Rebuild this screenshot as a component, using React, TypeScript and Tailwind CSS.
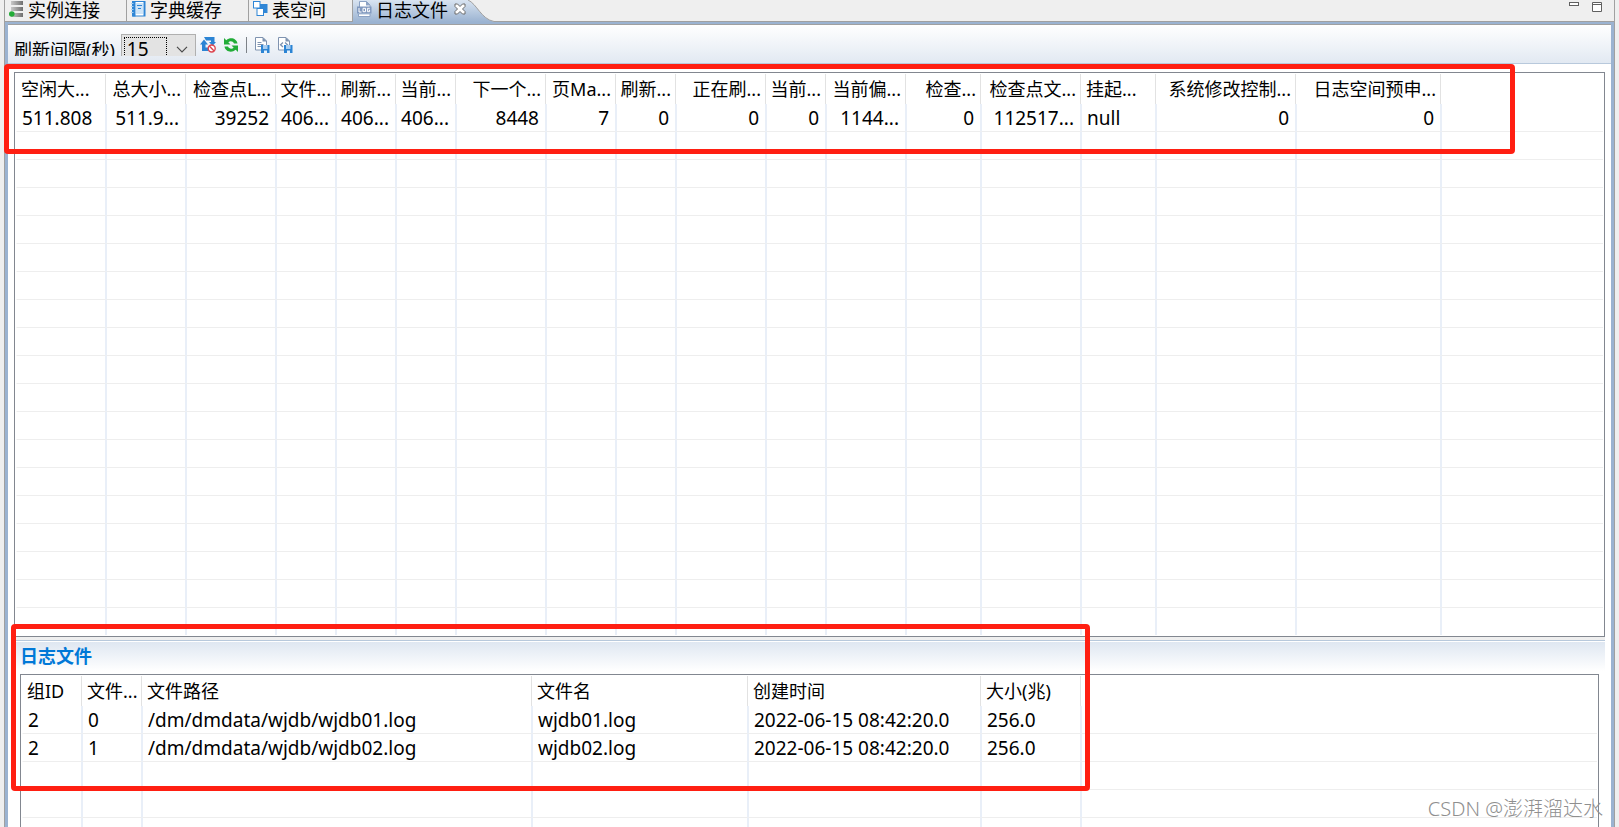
import type { ReactNode } from 'react';

type Column = { title: string; width: number; align?: 'left' | 'right' };

const logColumns: Column[] = [
  { title: '空闲大...', width: 90 },
  { title: '总大小...', width: 80, align: 'right' },
  { title: '检查点L...', width: 90, align: 'right' },
  { title: '文件...', width: 60, align: 'right' },
  { title: '刷新...', width: 60, align: 'right' },
  { title: '当前...', width: 60, align: 'right' },
  { title: '下一个...', width: 90, align: 'right' },
  { title: '页Ma...', width: 70, align: 'right' },
  { title: '刷新...', width: 60, align: 'right' },
  { title: '正在刷...', width: 90, align: 'right' },
  { title: '当前...', width: 60, align: 'right' },
  { title: '当前偏...', width: 80, align: 'right' },
  { title: '检查...', width: 75, align: 'right' },
  { title: '检查点文...', width: 100, align: 'right' },
  { title: '挂起...', width: 75 },
  { title: '系统修改控制...', width: 140, align: 'right' },
  { title: '日志空间预申...', width: 145, align: 'right' },
];

const logRows = [
  ['511.808', '511.9...', '39252', '406...', '406...', '406...', '8448', '7', '0', '0', '0', '1144...', '0', '112517...', 'null', '0', '0'],
];

const fileColumns: Column[] = [
  { title: '组ID', width: 60 },
  { title: '文件...', width: 60 },
  { title: '文件路径', width: 390 },
  { title: '文件名', width: 216 },
  { title: '创建时间', width: 233 },
  { title: '大小(兆)', width: 100 },
];

const fileRows = [
  ['2', '0', '/dm/dmdata/wjdb/wjdb01.log', 'wjdb01.log', '2022-06-15 08:42:20.0', '256.0'],
  ['2', '1', '/dm/dmdata/wjdb/wjdb02.log', 'wjdb02.log', '2022-06-15 08:42:20.0', '256.0'],
];

function GridTable({ label, columns, rows, blankRows }: { label: string; columns: Column[]; rows: string[][]; blankRows: number }) {
  const allRows = [...rows, ...Array.from({ length: blankRows }, () => [] as string[])];
  return (
    <table aria-label={label} className="w-full table-fixed border-separate border-spacing-0 whitespace-nowrap">
      <colgroup>
        {columns.map((col, i) => (
          <col key={i} style={{ width: col.width }} />
        ))}
        <col />
      </colgroup>
      <thead>
        <tr className="h-[30px]">
          {columns.map((col, i) => (
            <th
              key={i}
              className={`border-r border-[#e2e2e2] py-0 text-lg leading-6 font-normal ${col.align === 'right' ? 'pr-1 pl-0 text-right' : 'pr-0 pl-[5px] text-left'}`}
            >
              {col.title}
            </th>
          ))}
          <td />
        </tr>
      </thead>
      <tbody>
        {allRows.map((row, r) => (
          <tr key={r} className="h-7">
            {columns.map((col, i) => (
              <td
                key={i}
                className={`border-r border-b border-l border-r-[#e9eff8] border-b-[#eeeeee] py-0 text-[19px] leading-6 ${i > 0 ? 'border-l-[#e9eff8]' : 'border-l-white'} ${col.align === 'right' ? 'pr-1.5 pl-0 text-right' : 'pr-0 pl-[5px] text-left'}`}
              >
                {row[i]}
              </td>
            ))}
            <td className="border-b border-l border-b-[#eeeeee] border-l-[#e9eff8] p-0" />
          </tr>
        ))}
      </tbody>
    </table>
  );
}

function Tab({ icon, children }: { icon: ReactNode; children: ReactNode }) {
  return (
    <button role="tab" className="flex h-[22px] items-start gap-1 border-r border-b border-[#a0a0a0] pr-[26px] pl-1 text-lg leading-5">
      {icon}
      {children}
    </button>
  );
}

function InstanceIcon() {
  return (
    <svg width="15" height="18" viewBox="0 0 15 18" aria-hidden="true">
      <defs>
        <linearGradient id="bar" x1="0" x2="1" y1="0" y2="0">
          <stop offset="0" stopColor="#c9c9c9" />
          <stop offset="1" stopColor="#6f6f6f" />
        </linearGradient>
      </defs>
      <rect x="2" y="1" width="12" height="4" fill="url(#bar)" />
      <rect x="2" y="7" width="12" height="4" fill="url(#bar)" />
      <rect x="2" y="13" width="12" height="4" fill="url(#bar)" />
      <circle cx="2.8" cy="14" r="2.8" fill="#22ac38" />
    </svg>
  );
}

function DictionaryIcon() {
  return (
    <svg width="15" height="18" viewBox="0 0 15 18" aria-hidden="true">
      <path d="M1.5 1.5h11.5v14.5h-11.5z" fill="#fff" stroke="#2f86d6" />
      <path d="M1 1h3.500v15.500H1zM13 1h1.5v15.5H13z" fill="#2f86d6" />
      <path d="M0 3.500h2.500M0 6.500h2.500M0 9.500h2.500M0 12.500h2.500" stroke="#a9d1f3" />
      <rect x="5" y="3" width="7" height="11" fill="#cfe5f8" />
      <path d="M6 5.5h5M7 8.5h3" stroke="#2f86d6" />
    </svg>
  );
}

function TablespaceIcon() {
  return (
    <svg width="15" height="18" viewBox="0 0 15 18" aria-hidden="true">
      <rect x="6" y="4" width="8.5" height="9" fill="#2f86d6" />
      <rect x=".5" y="1.5" width="6.5" height="6.5" fill="#fff" stroke="#2f86d6" />
      <rect x="4" y="8.500" width="6.5" height="7" fill="#fff" stroke="#2f86d6" />
    </svg>
  );
}

function LogIcon() {
  return (
    <svg width="15" height="18" viewBox="0 0 15 18" aria-hidden="true">
      <path d="M2.5 7V1.5h7l3.5 3.5v2" fill="#fff" stroke="#8ba2c4" />
      <path d="M9 1v4.5h4z" fill="#8ba2c4" />
      <rect y="6.5" width="14.5" height="7" fill="#8098be" />
      <path d="M2 8v4h2.5M6 8.3h2.5v3.4H6zM12.8 8.3h-2.4v3.4h2.2V10h-1" fill="none" stroke="#fff" />
      <path d="M2 15.5h11" stroke="#fff" strokeWidth="2" />
      <path d="M1.5 14v2.5h11.5V14" fill="none" stroke="#8ba2c4" />
    </svg>
  );
}

function StopRefreshIcon() {
  return (
    <svg width="16" height="16" viewBox="0 0 16 16" aria-hidden="true">
      <path d="M4 0h10.500v5H16l-3.500 4L9 5h2V3.500H6z" fill="#2b84d4" />
      <path d="M4 2.500 8 7.500H5.500V10.500H9V14H2V7.500H0z" fill="#2b84d4" />
      <circle cx="11.700" cy="11.500" r="3.500" fill="#fff" stroke="#dd4650" strokeWidth="1.400" />
      <path d="m9.300 9.100 4.800 4.800" stroke="#dd4650" strokeWidth="1.400" />
    </svg>
  );
}

function RefreshIcon() {
  return (
    <svg width="14" height="16" viewBox="0 0 14 16" aria-hidden="true">
      <path d="M0 1v6.500h6.500L4.300 5.300C6 3.800 9 4 10 6.500h3.500C12.700 1.500 6.500-.5 2.300 3.200z" fill="#22ac38" />
      <path d="M14 15V8.500H7.500l2.200 2.200C8 12.200 5 12 4 9.500H.5C1.300 14.500 7.500 16.500 11.700 12.800z" fill="#22ac38" />
    </svg>
  );
}

function SaveIcon({ code }: { code?: boolean }) {
  return (
    <svg width="15" height="17" viewBox="0 0 15 17" aria-hidden="true">
      <path d="M.5.5h7.500l3.500 3.500v9H.5z" fill="#fff" stroke="#7f93b0" />
      <path d="M7.500 0v4.500H12z" fill="#7f93b0" />
      {code ? (
        <path d="M5 5.500 2.500 7.700 5 10M7 5.500l2.500 2.200L7 10" fill="none" stroke="#7f93b0" strokeWidth="1.300" />
      ) : (
        <path d="M2.500 5.500h4M2.500 7.500h6M2.500 9.500h4" stroke="#7f93b0" />
      )}
      <path d="M6 8h8.500v8H6z" fill="#2b84d4" />
      <path d="M8 8h4.500v4H8z" fill="#a9cdf0" />
      <path d="M9 13.500h3V16H9z" fill="#e6f1fb" />
    </svg>
  );
}

function TabStrip() {
  return (
    <div className="flex h-[22px] bg-[#efefef]">
      <div role="tablist" aria-label="视图" className="flex">
        <Tab icon={<InstanceIcon />}>实例连接</Tab>
        <Tab icon={<DictionaryIcon />}>字典缓存</Tab>
        <Tab icon={<TablespaceIcon />}>表空间</Tab>
        <div className="flex bg-gradient-to-b from-[#d9e4f1] to-[#9bb3d1]">
          <button role="tab" aria-selected="true" className="flex items-start gap-1 pl-1 text-lg leading-5">
            <LogIcon />
            日志文件
          </button>
          <button aria-label="关闭" className="flex h-[18px] items-center pl-1.5">
            <svg width="12" height="12" viewBox="0 0 12 12" aria-hidden="true">
              <path d="M1 1h2.500L6 3.500 8.500 1H11v2.500L8.500 6 11 8.500V11H8.500L6 8.500 3.500 11H1V8.500L3.500 6 1 3.500z" fill="#fff" stroke="#6b6b6b" />
            </svg>
          </button>
        </div>
        <svg width="34" height="22" viewBox="0 0 34 22" aria-hidden="true">
          <defs>
            <linearGradient id="slope" x1="0" x2="0" y1="0" y2="1">
              <stop offset="0" stopColor="#d9e4f1" />
              <stop offset="1" stopColor="#9bb3d1" />
            </linearGradient>
          </defs>
          <path d="M0 0h2c9 4 13 19 26 21.500h6V22H0z" fill="url(#slope)" />
          <path d="M2 0c9 4 13 19 26 21.500h6" fill="none" stroke="#a0a0a0" />
        </svg>
      </div>
      <div className="flex flex-1 items-start justify-end gap-[13px] border-b border-[#a0a0a0] pt-0.5 pr-3">
        <button aria-label="最小化">
          <svg width="10" height="4" viewBox="0 0 10 4" className="block" aria-hidden="true">
            <rect x=".5" y=".5" width="9" height="3" fill="#fff" stroke="#606060" />
          </svg>
        </button>
        <button aria-label="最大化">
          <svg width="10" height="10" viewBox="0 0 10 10" className="block" aria-hidden="true">
            <path d="M.5.5h9v9h-9zM.5 2.500h9" fill="#fff" stroke="#606060" />
          </svg>
        </button>
      </div>
    </div>
  );
}

function Toolbar() {
  return (
    <div className="h-[39px] border-b border-[#b8c9dc] bg-gradient-to-b from-white to-[#e2e9f2] pt-[9px] pl-1.5">
      <div className="flex h-[22px] items-start overflow-hidden">
        <label htmlFor="interval" className="pt-0.5 text-lg leading-7">
          刷新间隔(秒)
        </label>
        <div className="relative ml-1.5">
          <select
            id="interval"
            defaultValue="15"
            className="block h-[30px] w-[75px] appearance-none border border-[#b0b0b0] bg-[#e3e3e3] pl-[5px] text-[19px] leading-7 outline-none"
          >
            <option>15</option>
            <option>30</option>
          </select>
          <span className="pointer-events-none absolute top-[3px] left-[3px] h-6 w-[43px] border border-dotted border-black" />
          <svg width="12" height="7" viewBox="0 0 12 7" className="pointer-events-none absolute top-3 right-2" aria-hidden="true">
            <path d="m1 .8 5 5 5-5" fill="none" stroke="#4a4a4a" strokeWidth="1.200" />
          </svg>
        </div>
        <div className="flex items-start gap-2 pt-[3px] pl-1">
          <button aria-label="停止刷新">
            <StopRefreshIcon />
          </button>
          <button aria-label="刷新">
            <RefreshIcon />
          </button>
          <span className="h-4 w-px bg-[#7d8288]" />
          <button aria-label="保存">
            <SaveIcon />
          </button>
          <button aria-label="导出">
            <SaveIcon code />
          </button>
        </div>
      </div>
    </div>
  );
}

export default function App() {
  return (
    <div className="relative flex h-screen overflow-hidden bg-[#efefef] px-1 font-['Noto_Sans','Noto_Sans_CJK_SC',sans-serif] text-black">
      <div className="flex min-w-0 flex-1 flex-col border-x border-[#a0a0a0]">
        <TabStrip />
        <div className="h-0.5 bg-[#9bb3d1]" />
        <div className="flex min-h-0 flex-1 flex-col border-x-[3px] border-x-[#9bb3d1]">
          <div className="flex min-h-0 flex-1 flex-col border-t border-[#a0a0a0] bg-white">
            <Toolbar />
            <div className="mx-1.5 mt-2 min-h-0 flex-1 overflow-hidden border border-[#828790] p-px">
              <div className="h-full overflow-hidden">
                <GridTable label="日志信息" columns={logColumns} rows={logRows} blankRows={18} />
              </div>
            </div>
            <section className="mx-1.5 h-[190px] shrink-0 overflow-hidden border-t-[3px] border-[#efefef]">
              <div className="border-t border-[#b8c9dc] pt-px">
                <div className="bg-gradient-to-b from-[#dfe7f1] to-white to-90% px-1.5">
                  <h2 className="h-8 text-lg leading-7 font-bold text-[#0078d7]">日志文件</h2>
                </div>
                <div className="mx-1.5 border border-[#828790] p-px">
                  <GridTable label="日志文件" columns={fileColumns} rows={fileRows} blankRows={4} />
                </div>
              </div>
            </section>
          </div>
        </div>
      </div>

      {/* highlight frames */}
      <div className="pointer-events-none absolute top-16 left-1 h-[90px] w-[1511px] rounded border-[5px] border-[#ff1f12]" />
      <div className="pointer-events-none absolute top-[624px] left-[11px] h-[167px] w-[1079px] rounded border-[5px] border-[#ff1f12]" />
      <p className="pointer-events-none absolute right-4 bottom-1 text-xl leading-7 font-light text-[#8f8f8f]">CSDN @澎湃溜达水</p>
    </div>
  );
}
